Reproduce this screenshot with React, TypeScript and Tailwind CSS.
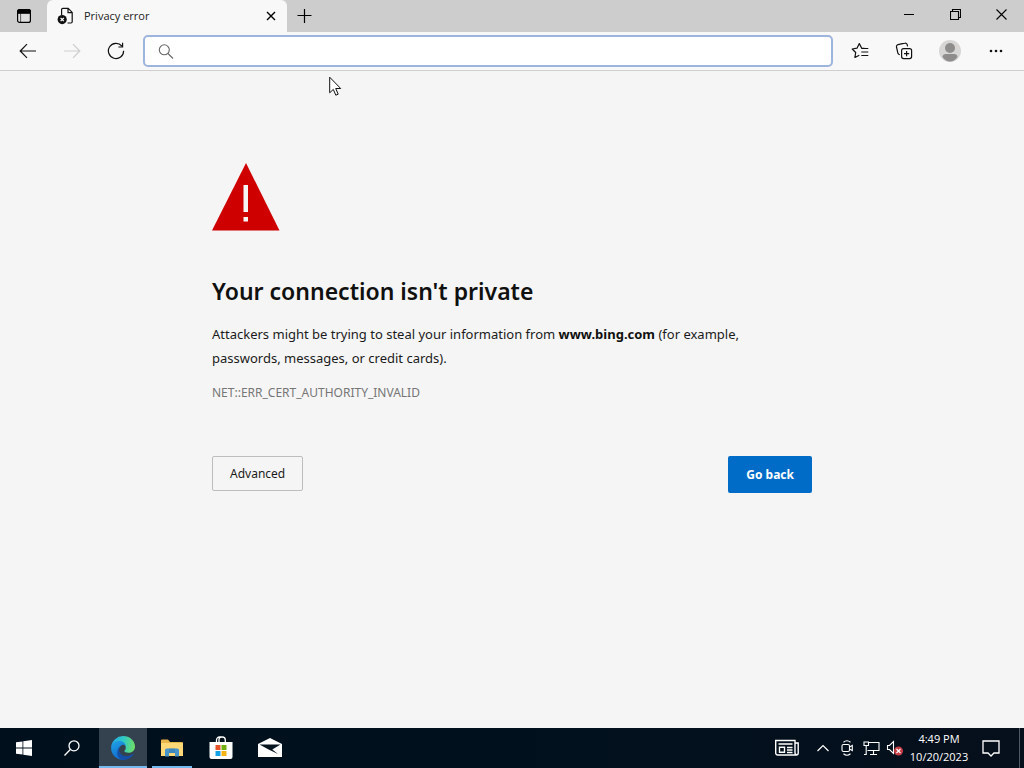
import type { ReactNode } from "react";

function IconButton({ label, className = "", children }: { label: string; className?: string; children: ReactNode }) {
  return (
    <button type="button" aria-label={label} className={`flex shrink-0 items-center justify-center ${className}`}>
      {children}
    </button>
  );
}

function TitleBar() {
  return (
    <header className="flex h-8 shrink-0 bg-[#cdcdcd] text-black">
      <IconButton label="Tab actions" className="w-12">
        <svg width="16" height="16" viewBox="0 0 16 16" fill="none" stroke="currentColor" strokeWidth="1.2">
          <rect x="1.6" y="1.6" width="12.8" height="12.8" rx="2" fill="#dedede" />
          <path d="M1.6 5.2V3.6a2 2 0 0 1 2-2h8.8a2 2 0 0 1 2 2v1.6z" fill="currentColor" />
          <path d="M4.6 5v9.4" strokeWidth="1" opacity=".6" />
        </svg>
      </IconButton>
      <div className="-ml-px flex w-60 items-center rounded-t-md bg-[#f8f8f8] pr-2 pl-2.5">
        <svg width="18" height="18" viewBox="0 0 18 18" fill="none" stroke="#111" strokeWidth="1.2">
          <path d="M4.6 8V2.6a1.2 1.2 0 0 1 1.2-1.2h5.4l4 4v9.4a1.2 1.2 0 0 1-1.2 1.2H10.5M11 1.6v4h4" />
          <circle cx="5.2" cy="12.6" r="4.6" fill="#111" stroke="none" />
          <path d="m3.6 11 3.2 3.2m0-3.2-3.2 3.2" stroke="#fff" />
        </svg>
        <span className="ml-[9px] grow text-[11px] text-[#222]">Privacy error</span>
        <IconButton label="Close tab" className="h-5 w-4">
          <svg width="10" height="10" viewBox="0 0 10 10" fill="none" stroke="currentColor" strokeWidth="1.4">
            <path d="m1 1 8 8m0-8-8 8" />
          </svg>
        </IconButton>
      </div>
      <IconButton label="New tab" className="w-9">
        <svg width="16" height="16" viewBox="0 0 16 16" fill="none" stroke="currentColor" strokeWidth="1.2">
          <path d="M7.500 1v14M.5 7.500h14" />
        </svg>
      </IconButton>
      <div className="ml-auto flex pb-1">
        <IconButton label="Minimize" className="w-[46px]">
          <svg width="10" height="10" viewBox="0 0 10 10" stroke="currentColor">
            <path d="M0 5.5h10" />
          </svg>
        </IconButton>
        <IconButton label="Restore" className="w-[46px]">
          <svg width="11" height="11" viewBox="0 0 11 11" fill="none" stroke="currentColor" strokeWidth="1.1">
            <path d="M.5 2.5h8v8h-8zM2.5 2.5v-2h8v8h-2" />
          </svg>
        </IconButton>
        <IconButton label="Close" className="w-[46px]">
          <svg width="11" height="11" viewBox="0 0 11 11" fill="none" stroke="currentColor" strokeWidth="1.1">
            <path d="m.5.5 10 10m0-10-10 10" />
          </svg>
        </IconButton>
      </div>
    </header>
  );
}

function Toolbar() {
  return (
    <nav className="flex h-[39px] shrink-0 items-center border-b border-[#cfcfcf] bg-[#f8f8f8] pr-1.5 pl-1.5 text-[#111]">
      <IconButton label="Back" className="h-8 w-11">
        <svg width="18" height="16" viewBox="0 0 18 16" fill="none" stroke="currentColor" strokeWidth="1.2">
          <path d="M17 8H1.5M8 1.2 1.2 8 8 14.8" />
        </svg>
      </IconButton>
      <IconButton label="Forward" className="h-8 w-11 text-[#cdcdcd]">
        <svg width="18" height="16" viewBox="0 0 18 16" fill="none" stroke="currentColor" strokeWidth="1.2">
          <path d="M1 8h15.500M10 1.200 16.800 8 10 14.800" />
        </svg>
      </IconButton>
      <IconButton label="Refresh" className="h-8 w-11">
        <svg width="18" height="18" viewBox="0 0 18 18" fill="none" stroke="currentColor" strokeWidth="1.2">
          <path d="M16.600 8.800A7.600 7.600 0 1 1 14.800 4M15.600.8v4.200H11.400" />
        </svg>
      </IconButton>
      <label className="ml-[5px] flex h-8 grow items-center rounded-[5px] border-2 border-[#9db4dc] bg-white pl-3">
        <svg width="17" height="17" viewBox="0 0 17 17" fill="none" stroke="#666" strokeWidth="1.1">
          <circle cx="7.300" cy="6.800" r="5" />
          <path d="m11 10.500 5 5" />
        </svg>
        <input type="text" aria-label="Address and search bar" className="ml-2 min-w-0 grow bg-transparent text-[14px] outline-none" />
      </label>
      <div className="ml-[3px] flex gap-0.5">
        <IconButton label="Favorites" className="h-8 w-11 pl-1">
          <svg width="18" height="18" viewBox="0 0 18 18" fill="none" stroke="currentColor" strokeWidth="1.200" strokeLinejoin="round">
            <path d="M14.400 6.500 10.600 6 8.300 1.600 6 6.200 1.200 7l3.500 3.500-.8 5 4.400-2.300M10.300 6.500h7M10.300 10h7M10.300 13.500h7" />
          </svg>
        </IconButton>
        <IconButton label="Collections" className="h-8 w-11">
          <svg width="18" height="18" viewBox="0 0 18 18" fill="none" stroke="currentColor" strokeWidth="1.200">
            <rect x="6.600" y="6.600" width="10" height="10" rx="2" />
            <path d="M11.600 9v5.200M9 11.600h5.200M4.800 12.800l-1-.5a2 2 0 0 1-1-1.400L1.500 5a2 2 0 0 1 1.500-2.400l6.800-1.400A2 2 0 0 1 12.200 2.700l.4 1.700" />
          </svg>
        </IconButton>
        <IconButton label="Profile" className="h-8 w-11">
          <svg width="22" height="22" viewBox="0 0 22 22">
            <circle cx="11" cy="11" r="11" fill="#d8d6d4" />
            <circle cx="11" cy="8" r="5" fill="#8f8d8c" />
            <path d="M3.500 17c0-2 1.500-3 3.300-3h8.400c1.800 0 3.300 1 3.300 3-1.600 2.700-4.300 4.500-7.500 4.500S5.100 19.700 3.500 17z" fill="#8f8d8c" />
          </svg>
        </IconButton>
        <IconButton label="Settings and more" className="h-8 w-11">
          <svg width="14" height="4" viewBox="0 0 14 4" fill="currentColor">
            <circle cx="2" cy="2" r="1.300" />
            <circle cx="7" cy="2" r="1.300" />
            <circle cx="12" cy="2" r="1.300" />
          </svg>
        </IconButton>
      </div>
    </nav>
  );
}

function ErrorPage() {
  return (
    <main className="min-h-0 grow overflow-hidden bg-[#f5f5f5] px-6 pt-[92px] font-['Noto_Sans','Open_Sans',sans-serif] text-[#1b1b1b]">
      <div className="mx-auto max-w-[600px]">
        <svg width="68" height="68" viewBox="0 0 68 68" role="img" aria-label="Warning">
          <path d="M34 0 67.500 67.500H0z" fill="#cf0000" />
          <path d="M31.500 22h4.500v27h-4.500zM31.500 54h4.500v4.500h-4.500z" fill="#f5f5f5" />
        </svg>
        <h1 className="mt-[42px] text-[23px] leading-9 font-semibold text-[#101010]">Your connection isn't private</h1>
        <p className="mt-[13px] max-w-[560px] text-[13px] leading-6">
          Attackers might be trying to steal your information from <strong className="font-bold text-[#101010]">www.bing.com</strong> (for example, passwords, messages, or credit cards).
        </p>
        <p className="mt-[13px] text-[12px] leading-5 text-[#767676]">NET::ERR_CERT_AUTHORITY_INVALID</p>
        <div className="mt-[53px] flex items-start justify-between">
          <button type="button" className="h-[35px] rounded-xs border border-[#bdbdbd] px-[17px] text-[12px]">
            Advanced
          </button>
          <button type="button" className="h-[37px] rounded-xs bg-[#006cc8] px-[18px] text-[12px] font-bold text-white">
            Go back
          </button>
        </div>
      </div>
    </main>
  );
}

function Taskbar() {
  return (
    <footer className="flex h-10 shrink-0 bg-linear-to-r from-[#000f1c] via-[#00111d] to-[#060f1c] text-white">
      <div className="flex">
        <IconButton label="Start" className="w-12">
          <svg width="16" height="16" viewBox="0 0 16 16" fill="currentColor">
            <path d="M0 2.300 6.500 1.400v6.200H0zM7.300 1.300 16 0v7.600H7.300zM0 8.400h6.500v6.200L0 13.700zM7.300 8.400H16V16l-8.700-1.300z" />
          </svg>
        </IconButton>
        <IconButton label="Search" className="w-12">
          <svg width="16" height="16" viewBox="0 0 16 16" fill="none" stroke="currentColor" strokeWidth="1.300">
            <circle cx="10" cy="5.800" r="5" />
            <path d="M6.300 9.500.5 15.500" />
          </svg>
        </IconButton>
      </div>
      <div className="ml-[3px] flex gap-px">
        <IconButton label="Microsoft Edge" className="w-12 border-b-2 border-[#76b9ed] bg-[#344250] pt-0.5">
          <svg width="24" height="24" viewBox="0 0 24 24">
            <defs>
              <linearGradient id="edgeTop" x1="0" y1=".4" x2="1" y2=".5">
                <stop offset="0" stopColor="#25a5e8" />
                <stop offset=".5" stopColor="#2fc9c4" />
                <stop offset="1" stopColor="#70df65" />
              </linearGradient>
              <linearGradient id="edgeLeft" x1="0" y1="0" x2=".4" y2="1">
                <stop offset="0" stopColor="#20a2e5" />
                <stop offset="1" stopColor="#106bce" />
              </linearGradient>
            </defs>
            <path d="M.2 11A12 12 0 0 1 12 0c7 0 12 5 12 10.500 0 4-3 6.300-6.600 6.300-2.500 0-4-.8-4-1.700 0-.7 1.400-1.100 1.400-3.300C14.800 8.500 11.800 6 8 6 4.200 6 1.400 8.200.2 11z" fill="url(#edgeTop)" />
            <path d="M.1 11.500C.6 7.500 4.500 5 8.500 5c3.600 0 6.300 2.500 6.300 5.500-1-1.800-3.400-2.300-5-.8-5 4.200-.4 13.500 6.200 13.600A12 12 0 0 1 .1 11.500z" fill="url(#edgeLeft)" />
            <path d="M9.800 9.700c-4.300 4.600.2 11.200 6.700 10.400 2.500-.3 4.200-1.300 5.200-2.100.5-.4 1 .1.700.6-1.500 2.500-4.700 5.300-9.600 5.300C5.500 23.900 4 14 9.800 9.700z" fill="#164fa7" />
          </svg>
        </IconButton>
        <IconButton label="File Explorer" className="w-12 px-1">
          <span className="flex h-full w-full items-center justify-center border-b-2 border-[#76b9ed] pt-0.5">
            <svg width="22" height="18" viewBox="0 0 22 18">
              <path d="M0 1.500A1 1 0 0 1 1 .5h6l2 2.500h12a1 1 0 0 1 1 1V17H0z" fill="#e9b64b" />
              <path d="M0 4h22v13H0z" fill="#ffd977" />
              <path d="M4 17.500V11a1.500 1.500 0 0 1 1.500-1.500h11A1.500 1.500 0 0 1 18 11v6.500h-4V14H8v3.500z" fill="#4a94ca" />
              <path d="M8 9.500h6V14H8z" fill="#367eb5" opacity=".6" />
            </svg>
          </span>
        </IconButton>
        <IconButton label="Microsoft Store" className="w-12">
          <svg width="24" height="24" viewBox="0 0 24 24">
            <path d="M7.500 6V4a3 3 0 0 1 3-3h2.800a3 3 0 0 1 3 3v2M10 6V3.500a2.500 2.500 0 0 1 2.500-2.500" fill="none" stroke="#fff" strokeWidth="1.300" />
            <path d="M.5 6h23v15a2 2 0 0 1-2 2H2.500a2 2 0 0 1-2-2z" fill="#fff" />
            <path d="M6.500 9h5v5h-5z" fill="#e65329" />
            <path d="M12.500 9h5v5h-5z" fill="#72ae13" />
            <path d="M6.500 15h5v5h-5z" fill="#12a1e5" />
            <path d="M12.500 15h5v5h-5z" fill="#f6b414" />
          </svg>
        </IconButton>
        <IconButton label="Mail" className="w-12">
          <svg width="24" height="20" viewBox="0 0 24 20">
            <path d="M0 6 12 0l12 6v13H0z" fill="#fff" />
            <path d="M1.500 6.500h21L14.300 11.500l5.700 4.500L10.600 11.500z" fill="#071521" />
          </svg>
        </IconButton>
      </div>

      <div className="ml-auto flex">
        <IconButton label="News and interests" className="w-12">
          <svg width="24" height="18" viewBox="0 0 24 18" fill="none" stroke="currentColor" strokeWidth="1.400">
            <path d="M20 4h3.200v10a2 2 0 0 1-2 2H2.700a2 2 0 0 1-2-2V1.500H20V14a1.500 1.500 0 0 0 1.500 1.500M3.500 5H17.500M12 8.500h5.500M12 11h5.500M12 13.500h5.500M4.500 8.200h5v5h-5z" />
          </svg>
        </IconButton>
        <IconButton label="Show hidden icons" className="w-6">
          <svg width="12" height="8" viewBox="0 0 12 8" fill="none" stroke="currentColor" strokeWidth="1.200">
            <path d="m.5 7 5.500-5.500L11.500 7" />
          </svg>
        </IconButton>
        <IconButton label="Meet Now" className="w-6">
          <svg width="13" height="16" viewBox="0 0 13 16" fill="none" stroke="currentColor" strokeWidth="1.100">
            <rect x="1" y="4.500" width="7.500" height="7" rx="1.500" />
            <path d="m8.500 7 2.800-1.500v5L8.500 9M2.500 2.200c2-1.600 5-1.600 7 0M2.500 13.800c2 1.600 5 1.600 7 0" />
          </svg>
        </IconButton>
        <IconButton label="Network" className="w-6">
          <svg width="17" height="15" viewBox="0 0 17 15" fill="none" stroke="currentColor" strokeWidth="1.100">
            <path d="M6 1.500h10v8H4.500M10.500 9.500v4M7 13.500h7M1 1h4.500v3.500H1zM3.200 4.500v9H1" />
          </svg>
        </IconButton>
        <IconButton label="Volume muted" className="w-6">
          <svg width="18" height="16" viewBox="0 0 18 16" fill="none" stroke="currentColor" strokeWidth="1.100">
            <path d="M1.500 5.500h2l4-4v12l-4-4h-2z" />
            <circle cx="12.500" cy="11" r="4.500" fill="#c63d46" stroke="none" />
            <path d="m10.500 9 4 4m0-4-4 4" />
          </svg>
        </IconButton>
        <button type="button" className="w-16 text-center text-[11px] leading-[18px] whitespace-nowrap">
          <time className="block">4:49 PM</time>
          <time className="block">10/20/2023</time>
        </button>
        <IconButton label="Notifications" className="w-10">
          <svg width="18" height="17" viewBox="0 0 18 17" fill="none" stroke="currentColor" strokeWidth="1.300">
            <path d="M1 1h16v12h-5l-3 3-3-3H1z" />
          </svg>
        </IconButton>
        <button type="button" aria-label="Show desktop" className="ml-2 w-[5px] border-l border-[#4d5a66]" />
      </div>
    </footer>
  );
}

function Pointer() {
  return (
    <svg className="pointer-events-none absolute top-[76px] left-[329px]" width="13" height="21" viewBox="0 0 13 21" aria-hidden="true">
      <path d="M.7 1.200v15.600l3.600-3.400 2.500 5.800 2.400-1-2.500-5.700h5z" fill="#fff" stroke="#111" strokeWidth="1" />
    </svg>
  );
}

export default function App() {
  return (
    <div className="relative flex h-screen flex-col overflow-hidden font-['Open_Sans','Noto_Sans',sans-serif]">
      <TitleBar />
      <Toolbar />
      <ErrorPage />
      <Taskbar />
      <Pointer />
    </div>
  );
}
